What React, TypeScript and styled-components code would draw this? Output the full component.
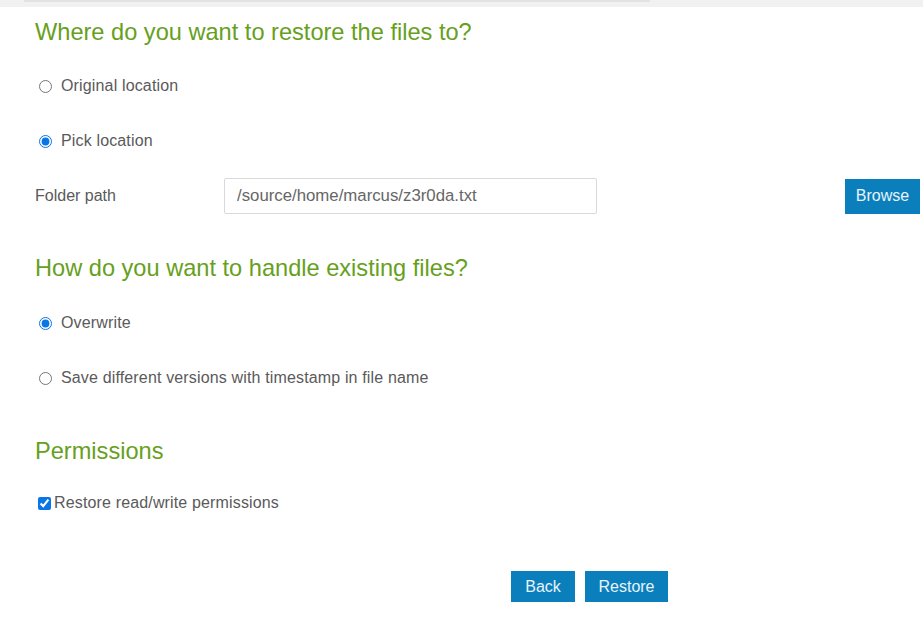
import React from "react";
import styled, { createGlobalStyle } from "styled-components";

const Global = createGlobalStyle`
  html, body { margin: 0; padding: 0; background: #fff; }
  body { font-family: "Liberation Sans", Arial, sans-serif; }
`;

const TopBar = styled.div`
  height: 7px;
  background: #f1f1f1;
  padding-left: 24px;
`;

const TopLine = styled.div`
  width: 626px;
  height: 2px;
  background: #e2e2e2;
`;

const Page = styled.div`
  padding: 0 3px 0 35px;
  display: flex;
  flex-direction: column;
`;

const Heading = styled.h2<{ $mt: number }>`
  margin: ${(p) => p.$mt}px 0 0 0;
  font-family: "Liberation Sans", Arial, sans-serif;
  font-weight: 400;
  font-size: 23.6px;
  line-height: 30px;
  color: #66a01d;
`;

const RadioRow = styled.label<{ $mt: number }>`
  display: flex;
  align-items: center;
  margin-top: ${(p) => p.$mt}px;
  height: 24px;
  font-size: 16px;
  letter-spacing: 0.15px;
  color: #5a5a5a;
  cursor: pointer;
`;

const Radio = styled.input.attrs({ type: "radio" })`
  width: 13px;
  height: 13px;
  margin: 0 9px 0 4px;
  accent-color: #0a75e6;
`;

const Check = styled.input.attrs({ type: "checkbox" })`
  width: 13px;
  height: 13px;
  margin: 0 3px 0 3px;
  accent-color: #0a75e6;
`;

const FieldRow = styled.div`
  display: flex;
  align-items: center;
  margin-top: 25px;
  height: 36px;
`;

const FieldLabel = styled.span`
  width: 189px;
  font-size: 16px;
  color: #5a5a5a;
`;

const TextInput = styled.input`
  box-sizing: border-box;
  width: 373px;
  height: 36px;
  border: 1px solid #d9d9d9;
  border-radius: 2px;
  padding: 0 12px;
  font-family: "Liberation Sans", Arial, sans-serif;
  font-size: 16.8px;
  color: #666;
  outline: none;
`;

const Button = styled.button<{ $w: number }>`
  box-sizing: border-box;
  width: ${(p) => p.$w}px;
  height: 31px;
  border: none;
  background: #0a7fbc;
  color: #e8f3fa;
  font-family: "Liberation Sans", Arial, sans-serif;
  font-size: 16px;
  padding: 0;
  cursor: pointer;
`;

const BrowseButton = styled(Button)`
  height: 35px;
  margin-left: auto;
`;

const Actions = styled.div`
  display: flex;
  gap: 10px;
  margin-top: 56px;
  padding-left: 476px;
`;

export default function App() {
  return (
    <>
      <Global />
      <TopBar>
        <TopLine />
      </TopBar>
      <Page>
        <Heading $mt={10}>Where do you want to restore the files to?</Heading>
        <RadioRow $mt={27}>
          <Radio name="loc" />
          Original location
        </RadioRow>
        <RadioRow $mt={31}>
          <Radio name="loc" defaultChecked />
          Pick location
        </RadioRow>
        <FieldRow>
          <FieldLabel>Folder path</FieldLabel>
          <TextInput defaultValue="/source/home/marcus/z3r0da.txt" />
          <BrowseButton $w={75}>Browse</BrowseButton>
        </FieldRow>
        <Heading $mt={39}>How do you want to handle existing files?</Heading>
        <RadioRow $mt={28}>
          <Radio name="exist" defaultChecked />
          Overwrite
        </RadioRow>
        <RadioRow $mt={31}>
          <Radio name="exist" />
          Save different versions with timestamp in file name
        </RadioRow>
        <Heading $mt={46}>Permissions</Heading>
        <RadioRow $mt={25}>
          <Check defaultChecked />
          Restore read/write permissions
        </RadioRow>
        <Actions>
          <Button $w={64}>Back</Button>
          <Button $w={83}>Restore</Button>
        </Actions>
      </Page>
    </>
  );
}
